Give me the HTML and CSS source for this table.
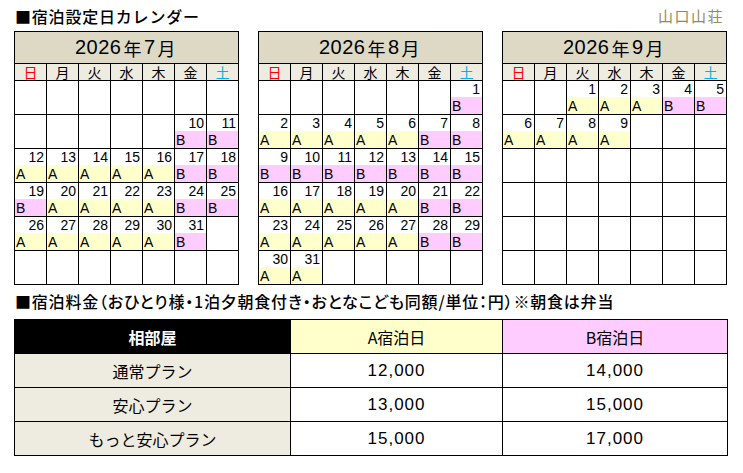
FILE: index.html
```html
<!DOCTYPE html>
<html lang="ja">
<head>
<meta charset="utf-8">
<title>宿泊設定日カレンダー</title>
<link rel="stylesheet" href="styles.css">
</head>
<body>
<div class="page">
  <div class="head">
    <h1 class="title">■宿泊設定日カレンダー</h1>
    <div class="brand">山口山荘</div>
  </div>

  <div class="cals">
    <div class="cal">
      <div class="ttl">2026<span class="jp">年</span>7<span class="jp">月</span></div>
      <div class="wd sun">日</div><div class="wd">月</div><div class="wd">火</div><div class="wd">水</div><div class="wd">木</div><div class="wd">金</div><div class="wd sat">土</div>

      <div class="day"></div><div class="day"></div><div class="day"></div><div class="day"></div><div class="day"></div><div class="day"></div><div class="day"></div>

      <div class="day"></div><div class="day"></div><div class="day"></div><div class="day"></div><div class="day"></div>
      <div class="day"><div class="n">10</div><div class="b">B</div></div>
      <div class="day"><div class="n">11</div><div class="b">B</div></div>

      <div class="day"><div class="n">12</div><div class="a">A</div></div>
      <div class="day"><div class="n">13</div><div class="a">A</div></div>
      <div class="day"><div class="n">14</div><div class="a">A</div></div>
      <div class="day"><div class="n">15</div><div class="a">A</div></div>
      <div class="day"><div class="n">16</div><div class="a">A</div></div>
      <div class="day"><div class="n">17</div><div class="b">B</div></div>
      <div class="day"><div class="n">18</div><div class="b">B</div></div>

      <div class="day"><div class="n">19</div><div class="b">B</div></div>
      <div class="day"><div class="n">20</div><div class="a">A</div></div>
      <div class="day"><div class="n">21</div><div class="a">A</div></div>
      <div class="day"><div class="n">22</div><div class="a">A</div></div>
      <div class="day"><div class="n">23</div><div class="a">A</div></div>
      <div class="day"><div class="n">24</div><div class="b">B</div></div>
      <div class="day"><div class="n">25</div><div class="b">B</div></div>

      <div class="day"><div class="n">26</div><div class="a">A</div></div>
      <div class="day"><div class="n">27</div><div class="a">A</div></div>
      <div class="day"><div class="n">28</div><div class="a">A</div></div>
      <div class="day"><div class="n">29</div><div class="a">A</div></div>
      <div class="day"><div class="n">30</div><div class="a">A</div></div>
      <div class="day"><div class="n">31</div><div class="b">B</div></div>
      <div class="day"></div>

      <div class="day"></div><div class="day"></div><div class="day"></div><div class="day"></div><div class="day"></div><div class="day"></div><div class="day"></div>
    </div>

    <div class="cal">
      <div class="ttl">2026<span class="jp">年</span>8<span class="jp">月</span></div>
      <div class="wd sun">日</div><div class="wd">月</div><div class="wd">火</div><div class="wd">水</div><div class="wd">木</div><div class="wd">金</div><div class="wd sat">土</div>

      <div class="day"></div><div class="day"></div><div class="day"></div><div class="day"></div><div class="day"></div><div class="day"></div>
      <div class="day"><div class="n">1</div><div class="b">B</div></div>

      <div class="day"><div class="n">2</div><div class="a">A</div></div>
      <div class="day"><div class="n">3</div><div class="a">A</div></div>
      <div class="day"><div class="n">4</div><div class="a">A</div></div>
      <div class="day"><div class="n">5</div><div class="a">A</div></div>
      <div class="day"><div class="n">6</div><div class="a">A</div></div>
      <div class="day"><div class="n">7</div><div class="b">B</div></div>
      <div class="day"><div class="n">8</div><div class="b">B</div></div>

      <div class="day"><div class="n">9</div><div class="b">B</div></div>
      <div class="day"><div class="n">10</div><div class="b">B</div></div>
      <div class="day"><div class="n">11</div><div class="b">B</div></div>
      <div class="day"><div class="n">12</div><div class="b">B</div></div>
      <div class="day"><div class="n">13</div><div class="b">B</div></div>
      <div class="day"><div class="n">14</div><div class="b">B</div></div>
      <div class="day"><div class="n">15</div><div class="b">B</div></div>

      <div class="day"><div class="n">16</div><div class="a">A</div></div>
      <div class="day"><div class="n">17</div><div class="a">A</div></div>
      <div class="day"><div class="n">18</div><div class="a">A</div></div>
      <div class="day"><div class="n">19</div><div class="a">A</div></div>
      <div class="day"><div class="n">20</div><div class="a">A</div></div>
      <div class="day"><div class="n">21</div><div class="b">B</div></div>
      <div class="day"><div class="n">22</div><div class="b">B</div></div>

      <div class="day"><div class="n">23</div><div class="a">A</div></div>
      <div class="day"><div class="n">24</div><div class="a">A</div></div>
      <div class="day"><div class="n">25</div><div class="a">A</div></div>
      <div class="day"><div class="n">26</div><div class="a">A</div></div>
      <div class="day"><div class="n">27</div><div class="a">A</div></div>
      <div class="day"><div class="n">28</div><div class="b">B</div></div>
      <div class="day"><div class="n">29</div><div class="b">B</div></div>

      <div class="day"><div class="n">30</div><div class="a">A</div></div>
      <div class="day"><div class="n">31</div><div class="a">A</div></div>
      <div class="day"></div><div class="day"></div><div class="day"></div><div class="day"></div><div class="day"></div>
    </div>

    <div class="cal">
      <div class="ttl">2026<span class="jp">年</span>9<span class="jp">月</span></div>
      <div class="wd sun">日</div><div class="wd">月</div><div class="wd">火</div><div class="wd">水</div><div class="wd">木</div><div class="wd">金</div><div class="wd sat">土</div>

      <div class="day"></div><div class="day"></div>
      <div class="day"><div class="n">1</div><div class="a">A</div></div>
      <div class="day"><div class="n">2</div><div class="a">A</div></div>
      <div class="day"><div class="n">3</div><div class="a">A</div></div>
      <div class="day"><div class="n">4</div><div class="b">B</div></div>
      <div class="day"><div class="n">5</div><div class="b">B</div></div>

      <div class="day"><div class="n">6</div><div class="a">A</div></div>
      <div class="day"><div class="n">7</div><div class="a">A</div></div>
      <div class="day"><div class="n">8</div><div class="a">A</div></div>
      <div class="day"><div class="n">9</div><div class="a">A</div></div>
      <div class="day"></div><div class="day"></div><div class="day"></div>

      <div class="day"></div><div class="day"></div><div class="day"></div><div class="day"></div><div class="day"></div><div class="day"></div><div class="day"></div>
      <div class="day"></div><div class="day"></div><div class="day"></div><div class="day"></div><div class="day"></div><div class="day"></div><div class="day"></div>
      <div class="day"></div><div class="day"></div><div class="day"></div><div class="day"></div><div class="day"></div><div class="day"></div><div class="day"></div>
      <div class="day"></div><div class="day"></div><div class="day"></div><div class="day"></div><div class="day"></div><div class="day"></div><div class="day"></div>
    </div>
  </div>

  <h2 class="title sub">■宿泊料金（おひとり様・1泊夕朝食付き・おとなこども同額/単位：円）※朝食は弁当</h2>

  <div class="price">
    <div class="ph room">相部屋</div>
    <div class="ph pa">A宿泊日</div>
    <div class="ph pb">B宿泊日</div>

    <div class="plan">通常プラン</div>
    <div class="val">12,000</div>
    <div class="val">14,000</div>

    <div class="plan">安心プラン</div>
    <div class="val">13,000</div>
    <div class="val">15,000</div>

    <div class="plan">もっと安心プラン</div>
    <div class="val">15,000</div>
    <div class="val">17,000</div>
  </div>
</div>
</body>
</html>
```
FILE: styles.css
```css
* { box-sizing: border-box; }
html, body { margin: 0; padding: 0; background: #fff; }
body {
  font-family: "Noto Sans CJK JP", "Liberation Sans", sans-serif;
  color: #000;
}
.page {
  width: 743px;
  padding: 0 16px 0 14px;
}
.head {
  height: 31px;
  display: flex;
  justify-content: space-between;
  align-items: center;
}
.title {
  margin: 0;
  font-size: 16px;
  font-weight: 500;
  line-height: 20px;
  letter-spacing: 0.8px;
  padding-left: 1px;
}
.brand {
  font-size: 15px;
  font-weight: 400;
  color: #948a54;
  letter-spacing: 1.5px;
  margin-right: 3px;
  line-height: 20px;
}
.cals {
  display: flex;
  gap: 19px;
}
.cal {
  display: grid;
  grid-template-columns: repeat(7, 31px);
  grid-template-rows: 31px 16px repeat(6, 33px);
  gap: 1px;
  padding: 1px;
  background: #000;
  width: 225px;
}
.ttl {
  grid-column: 1 / -1;
  background: #ddd9c4;
  display: flex;
  align-items: center;
  justify-content: center;
  font-family: "Liberation Sans", sans-serif;
  font-size: 20px;
  letter-spacing: 0.5px;
}
.ttl .jp {
  font-family: "Noto Sans CJK JP", sans-serif;
  font-size: 18px;
  margin: 0 2px;
}
.cal > .wd {
  background: #eeece1;
  font-size: 14px;
  line-height: 16px;
  text-align: center;
}
.wd.sun { color: #ff0000; }
.wd.sat { color: #00b0f0; }
.day {
  background: #fff;
  display: flex;
  flex-direction: column;
  font-family: "Liberation Sans", sans-serif;
  font-size: 14px;
}
.day .n {
  height: 16px;
  line-height: 16px;
  text-align: right;
  padding-right: 2px;
}
.day .a, .day .b {
  height: 17px;
  line-height: 19px;
  padding-left: 1px;
}
.day .a { background: #ffffcc; }
.day .b { background: #ffccff; }

.sub {
  height: 34px;
  line-height: 32px;
  letter-spacing: 0.8px;
  font-feature-settings: "palt";
}
.price {
  display: grid;
  grid-template-columns: 275px 211px 224px;
  grid-auto-rows: 33px;
  gap: 1px;
  padding: 1px;
  background: #000;
  width: 714px;
}
.price > div {
  display: flex;
  align-items: center;
  justify-content: center;
  font-size: 16px;
}
.ph.room { background: #000; color: #fff; font-weight: 700; }
.ph.pa { background: #ffffcc; }
.ph.pb { background: #ffccff; }
.plan { background: #eeece1; }
.price > .val {
  background: #fff;
  font-family: "Liberation Sans", sans-serif;
  font-size: 17px;
  letter-spacing: 1px;
}
```
